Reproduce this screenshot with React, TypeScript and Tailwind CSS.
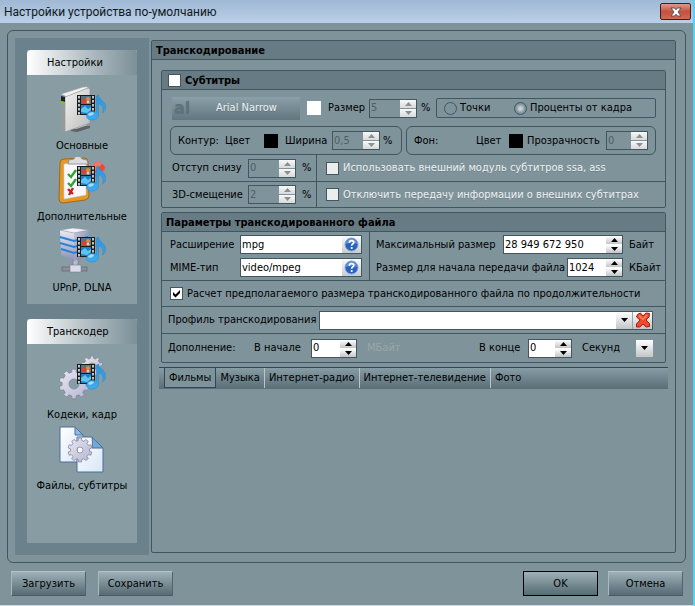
import { ReactNode, useId, useState } from 'react'
import clsx from 'clsx'

const tabs = ['Фильмы', 'Музыка', 'Интернет-радио', 'Интернет-телевидение', 'Фото']

function MediaBadge() {
  return (
    <g>
      <rect x="20" y="10" width="18" height="20" fill="#1b1b1b" />
      {[11, 15, 19, 23, 27].map((y) => (
        <g key={y} fill="#b9c3c8">
          <rect x="21" y={y} width="2" height="2.500" />
          <rect x="35" y={y} width="2" height="2.500" />
        </g>
      ))}
      <rect x="24" y="11" width="10" height="8" fill="#55748c" />
      <circle cx="27" cy="16" r="2.5" fill="#d8452f" />
      <circle cx="31" cy="14" r="2" fill="#e58a2c" />
      <circle cx="31" cy="17" r="1.5" fill="#f0c9a5" />
      <rect x="24" y="20" width="10" height="9" fill="#1c82c6" />
      <path d="M24 24l4-3 3 3 3-2v3l-4 3-6-1z" fill="#5fc3ee" />
      <path
        d="M39.500 11l2-1c.5 5 7 6 7 12 0 3-1 4.500-3 6 1.500-5 .5-8-4-9.500v12c0 2.500-3.500 4.500-6.500 4.500s-5.500-1.500-5.500-4 3-4.500 6-4.500c1.500 0 3 .2 4 .8z"
        fill="url(#note)"
        stroke="#2a8bd0"
        strokeWidth=".6"
      />
      <ellipse cx="34" cy="29" rx="3" ry="1.5" fill="#a5dcfa" transform="rotate(-20 34 29)" />
    </g>
  )
}

// Shared gradients, rendered once for all sidebar icons
function IconDefs() {
  return (
    <svg width="0" height="0" className="absolute" aria-hidden="true">
      <defs>
        <linearGradient id="note" x1="0" y1="0" x2="0" y2="1">
          <stop offset="0" stopColor="#2c95dd" />
          <stop offset="1" stopColor="#3dabed" />
        </linearGradient>
        <linearGradient id="box" x1="0" y1="0" x2="1" y2="1">
          <stop offset="0" stopColor="#f4f4f2" />
          <stop offset="1" stopColor="#b9bbba" />
        </linearGradient>
        <linearGradient id="server" x1="0" y1="0" x2="1" y2="1">
          <stop offset="0" stopColor="#c9cade" />
          <stop offset="1" stopColor="#6e7198" />
        </linearGradient>
        <linearGradient id="serverSide" x1="0" y1="0" x2="0" y2="1">
          <stop offset="0" stopColor="#e9eaf4" />
          <stop offset="1" stopColor="#8d90b4" />
        </linearGradient>
        <linearGradient id="gear" x1="0" y1="0" x2="1" y2="1">
          <stop offset="0" stopColor="#e9e9f3" />
          <stop offset="1" stopColor="#b3b4cf" />
        </linearGradient>
        <linearGradient id="page" x1="0" y1="0" x2="1" y2="1">
          <stop offset="0" stopColor="#ffffff" />
          <stop offset="1" stopColor="#d7e6f7" />
        </linearGradient>
      </defs>
    </svg>
  )
}

function Gear({ cx, cy, r, hole }: { cx: number; cy: number; r: number; hole: number }) {
  const teeth = 10
  const points: string[] = []
  for (let i = 0; i < teeth; i++) {
    const parts: [number, number][] = [
      [-0.3, 0.8],
      [-0.22, 1],
      [0.22, 1],
      [0.3, 0.8],
    ]
    parts.forEach(([offset, k]) => {
      const a = ((i + offset) * 2 * Math.PI) / teeth
      points.push(`${(cx + Math.sin(a) * r * k).toFixed(2)} ${(cy - Math.cos(a) * r * k).toFixed(2)}`)
    })
  }
  const circle = `M${cx - hole} ${cy}a${hole} ${hole} 0 1 0 ${hole * 2} 0a${hole} ${hole} 0 1 0 ${-hole * 2} 0z`
  return (
    <path
      d={`M${points.join('L')}z${circle}`}
      fill="url(#gear)"
      fillRule="evenodd"
      stroke="#84869f"
      strokeWidth=".8"
      strokeLinejoin="round"
    />
  )
}

function IconSvg({ children }: { children: ReactNode }) {
  return (
    <svg width="50" height="50" viewBox="0 0 50 50" aria-hidden="true">
      {children}
    </svg>
  )
}

function BasicIcon() {
  return (
    <IconSvg>
      <path d="M14 44l12-4 7 1v2l-13 4-6-1z" fill="#5e6264" />
      <path d="M16 43l11-4 4 1-12 4z" fill="#c7caca" />
      <path d="M4 9L26 2q4-1 6 1L10 12z" fill="#f2f3f2" stroke="#9a9c9c" strokeWidth=".6" />
      <path d="M8 12L31 3q2 0 2 2v33L8 47z" fill="url(#box)" stroke="#8d8f8f" strokeWidth=".6" />
      <path d="M4 10l4 2v35l-4-3z" fill="#979a9a" />
      <path d="M4 11l4 1v5l-4-1z" fill="#222" />
      <path d="M4 16l4 1-2 2-2-1z" fill="#70d020" />
      <MediaBadge />
    </IconSvg>
  )
}

function ExtraIcon() {
  return (
    <IconSvg>
      <path d="M3 7q0-4 4-4l20-1q4 0 4 4l1 34q0 3-4 4l-22 3q-4 0-4-4z" fill="#e49a27" stroke="#a96513" />
      <path d="M7 8l22-2v33L7 43z" fill="#f8f9fd" stroke="#c6c9da" strokeWidth=".6" />
      <path d="M11 8l1-4 5-1c0-3 7-4 8 0l5 1 1 4z" fill="#dcdde3" stroke="#85878f" strokeWidth=".8" />
      <path d="M37 8q3-4 7-1 6 4 3 7l-5 5-9-6z" fill="#ee4638" />
      <path d="M37 8q3-4 7-1l1 1-7 7-6-3z" fill="#ff8878" opacity=".7" />
      <path d="M31 13l9 6-10 12-5-5z" fill="#5a83c2" />
      <g fill="none" strokeWidth="2.4">
        <path d="M11 18l3 3 5-7" stroke="#31a331" />
        <path d="M11 27l3 3 5-7" stroke="#31a331" />
        <path d="M11 33l5 5M16 32l-4 7" stroke="#cc1f1f" />
      </g>
      <MediaBadge />
    </IconSvg>
  )
}

function ServerIcon() {
  return (
    <IconSvg>
      <rect x="16" y="32" width="5" height="10" fill="#b7b9ce" stroke="#73768f" strokeWidth=".6" />
      <rect x="5" y="40" width="25" height="4" fill="#8b8e9b" stroke="#5a5d68" strokeWidth=".6" />
      <path d="M13 38h11v7H13z" fill="#d9daea" stroke="#7b7e97" strokeWidth=".6" />
      <path d="M3 3l14 3v28L4 28z" fill="url(#serverSide)" />
      <path d="M17 6l15-3v26l-15 5z" fill="url(#server)" />
      <path d="M3 3l13-2 16 2-15 3z" fill="#f1f1f8" stroke="#8b8dab" strokeWidth=".5" />
      <g fill="none" stroke="#2584da" strokeWidth="2">
        <path d="M3 10l14 4 14-4" />
        <path d="M3 16l14 4 14-4" />
        <path d="M4 22l13 4 14-4" />
      </g>
      <MediaBadge />
    </IconSvg>
  )
}

function CodecIcon() {
  return (
    <IconSvg>
      <Gear cx={35} cy={13} r={11} hole={4} />
      <Gear cx={17} cy={30} r={15} hole={5} />
      <MediaBadge />
    </IconSvg>
  )
}

function FilesIcon() {
  return (
    <IconSvg>
      <path d="M3 2h15l8 8v27H3z" fill="url(#page)" stroke="#4d6d9b" />
      <path d="M18 2v8h8z" fill="#8dbce8" stroke="#4d6d9b" />
      <path d="M20 12h15l11 11v24H20z" fill="url(#page)" stroke="#4d6d9b" />
      <path d="M35 12q1 7 0 11h11z" fill="#6fa9de" stroke="#4d6d9b" />
      <Gear cx={23} cy={25} r={12} hole={3} />
    </IconSvg>
  )
}

function SidebarItem({ icon, label }: { icon: ReactNode; label: string }) {
  return (
    <a href="#" className="flex h-[71px] flex-col items-center">
      {icon}
      <span className="mt-[5px] leading-3 whitespace-nowrap">{label}</span>
    </a>
  )
}

function SidebarGroup({ title, children }: { title: string; children: ReactNode }) {
  return (
    <section className="bg-[#879ca3]">
      <h2 className="flex h-[25px] items-center rounded-t-sm bg-linear-to-r from-white via-[#b9c4c8] to-[#7b9099] pt-px pl-5">
        {title}
      </h2>
      <div className="pt-[10px]">{children}</div>
    </section>
  )
}

function Arrow({ up, muted }: { up?: boolean; muted?: boolean }) {
  return (
    <svg width="7" height="4" viewBox="0 0 7 4" aria-hidden="true">
      <path d={up ? 'M0 4L3.5 0L7 4z' : 'M0 0h7L3.5 4z'} fill={muted ? '#8b8f91' : '#000'} />
    </svg>
  )
}

interface SpinnerProps {
  id: string
  value: string
  disabled?: boolean
  className: string
}

function Spinner({ id, value, disabled, className }: SpinnerProps) {
  const button = clsx(
    'flex flex-1 items-center justify-center bg-linear-to-b',
    disabled ? 'from-[#f8f8f8] to-[#d8dadb]' : 'from-white to-[#c3c5c7]'
  )
  return (
    <div
      className={clsx(
        'flex h-[19px] shrink-0 border border-[#41565f]',
        disabled ? 'bg-[#7f939b] text-[#4c6069]' : 'bg-white text-black',
        className
      )}
    >
      <input id={id} defaultValue={value} disabled={disabled} className="w-0 min-w-0 flex-1 pl-px outline-none" />
      <div className="flex w-4 flex-col gap-px">
        <button type="button" aria-label="+" disabled={disabled} className={button}>
          <Arrow up muted={disabled} />
        </button>
        <button type="button" aria-label="-" disabled={disabled} className={button}>
          <Arrow muted={disabled} />
        </button>
      </div>
    </div>
  )
}

function Checkbox({ id, checked, disabled }: { id: string; checked?: boolean; disabled?: boolean }) {
  return (
    <span className="grid size-[13px] shrink-0">
      <input
        id={id}
        type="checkbox"
        defaultChecked={checked}
        disabled={disabled}
        className="peer col-start-1 row-start-1 size-[13px] appearance-none border border-[#41565f] bg-white disabled:bg-[#eceeee]"
      />
      <svg
        viewBox="0 0 13 13"
        className="pointer-events-none invisible col-start-1 row-start-1 size-[13px] peer-checked:visible"
      >
        <path d="M3 5v3l2.500 2.500L10 6V3L5.500 7.500z" fill="#000" />
      </svg>
    </span>
  )
}

function Swatch({ label, color }: { label: string; color: string }) {
  return <button type="button" aria-label={label} className={clsx('size-[14px] shrink-0', color)} />
}

function Panel({ title, children }: { title: ReactNode; children: ReactNode }) {
  return (
    <section className="rounded-xs border border-[#41565f]">
      <h3 className="flex h-[19px] items-center border-b border-[#41565f] bg-[#677b84] px-1 pt-px text-[11px] font-bold">
        {title}
      </h3>
      {children}
    </section>
  )
}

function HelpField({ id, value }: { id: string; value: string }) {
  return (
    <div className="flex h-[19px] w-[122px] border border-[#41565f] bg-white">
      <input id={id} defaultValue={value} className="w-0 min-w-0 flex-1 pl-px outline-none" />
      <button
        type="button"
        aria-label="?"
        className="flex w-[19px] items-center justify-center bg-linear-to-b from-[#fbfbfb] to-[#c8cbcd]"
      >
        <svg width="15" height="15" viewBox="0 0 15 15" aria-hidden="true">
          <circle cx="7.5" cy="7.5" r="6.5" fill="#2a62bd" stroke="#7fa5dd" />
          <path d="M2 7a5.500 5.500 0 0 1 11 0q-5-3-11 0z" fill="#78a6e6" opacity=".7" />
          <path d="M5.300 5.800q.2-2.200 2.300-2.200 2.200 0 2.200 1.800 0 1-1.200 1.700-.9.500-.9 1.600" fill="none" stroke="#fff" strokeWidth="1.700" />
          <circle cx="7.700" cy="11" r="1.100" fill="#fff" />
        </svg>
      </button>
    </div>
  )
}

function SubtitlesPanel() {
  const id = useId()
  return (
    <Panel
      title={
        <span className="flex items-center gap-1 pl-[2px]">
          <Checkbox id={`${id}-on`} />
          <label htmlFor={`${id}-on`}>Субтитры</label>
        </span>
      }
    >
      <div className="flex h-9 items-center pr-[9px] pl-[10px]">
        <button
          type="button"
          disabled
          className="flex h-[23px] w-32 shrink-0 items-center bg-linear-to-b from-[#8ba0a8] to-[#61767f] text-[#eef1f2] text-shadow-2xs"
        >
          <span className="w-9 pl-[2px] text-left font-['DejaVu_Sans'] text-base leading-5 font-bold text-[#5d727b]">
            al
          </span>
          <span className="pl-2">Arial Narrow</span>
        </button>
        <span className="flex w-[69px] items-center gap-[7px] pl-[7px]">
          <Swatch label="Цвет" color="bg-white" />
          <label htmlFor={`${id}-size`}>Размер</label>
        </span>
        <Spinner id={`${id}-size`} value="5" disabled className="w-12" />
        <span className="w-[19px] pl-1">%</span>
        <div className="flex h-5 flex-1 items-center rounded-xs border border-[#41565f] pl-[7px]">
          <label className="flex w-[70px] items-center gap-[3px]">
            <input
              type="radio"
              name={`${id}-unit`}
              disabled
              className="size-[13px] appearance-none rounded-full border border-[#41565f]"
            />
            Точки
          </label>
          <label className="flex items-center gap-[3px]">
            <input
              type="radio"
              name={`${id}-unit`}
              disabled
              defaultChecked
              className="size-[13px] appearance-none rounded-full border border-[#41565f] bg-radial from-[#cbd2d5] from-15% to-[#7f939b] to-60%"
            />
            Проценты от кадра
          </label>
        </div>
      </div>
      <div className="flex h-[29px] gap-1 pr-[9px] pl-2">
        <div className="flex w-[232px] items-center rounded-md border border-[#41565f] pl-[7px]">
          <span className="w-[47px]">Контур:</span>
          <span className="w-[39px]">Цвет</span>
          <Swatch label="Цвет контура" color="bg-black" />
          <label htmlFor={`${id}-width`} className="w-[54px] pl-[7px]">
            Ширина
          </label>
          <Spinner id={`${id}-width`} value="0,5" disabled className="w-12" />
          <span className="pl-[3px]">%</span>
        </div>
        <div className="flex flex-1 items-center rounded-md border border-[#41565f] px-[7px]">
          <span className="flex-1">Фон:</span>
          <span className="w-[33px]">Цвет</span>
          <Swatch label="Цвет фона" color="bg-black" />
          <label htmlFor={`${id}-alpha`} className="w-[83px] pl-1">
            Прозрачность
          </label>
          <Spinner id={`${id}-alpha`} value="0" disabled className="w-[42px]" />
        </div>
      </div>
      <div className="flex">
        <div className="flex w-[155px] flex-col border-r border-[#41565f]">
          <div className="flex h-[27px] items-center border-b border-[#41565f]">
            <label htmlFor={`${id}-bottom`} className="w-[86px] pl-[10px] whitespace-nowrap">
              Отступ снизу
            </label>
            <Spinner id={`${id}-bottom`} value="0" disabled className="w-12" />
            <span className="pl-[6px]">%</span>
          </div>
          <div className="flex h-[25px] items-center">
            <label htmlFor={`${id}-shift`} className="w-[86px] pl-[10px] whitespace-nowrap">
              3D-смещение
            </label>
            <Spinner id={`${id}-shift`} value="2" disabled className="w-12" />
            <span className="pl-[6px]">%</span>
          </div>
        </div>
        <div className="flex flex-1 flex-col text-[#eef1f2] text-shadow-2xs">
          <div className="flex h-[27px] items-center gap-1 border-b border-[#41565f] pl-[9px]">
            <Checkbox id={`${id}-ssa`} disabled />
            <label htmlFor={`${id}-ssa`}>Использовать внешний модуль субтитров ssa, ass</label>
          </div>
          <div className="flex h-[25px] items-center gap-1 pl-[9px]">
            <Checkbox id={`${id}-info`} disabled />
            <label htmlFor={`${id}-info`}>Отключить передачу информации о внешних субтитрах</label>
          </div>
        </div>
      </div>
    </Panel>
  )
}

function FilePanel() {
  const id = useId()
  return (
    <Panel title="Параметры транскодированного файла">
      <div className="flex h-[49px] border-b border-[#41565f]">
        <div className="flex w-52 flex-col gap-1 border-r border-[#41565f] pt-[3px] pl-2">
          <div className="flex items-center">
            <label htmlFor={`${id}-ext`} className="w-[70px]">
              Расширение
            </label>
            <HelpField id={`${id}-ext`} value="mpg" />
          </div>
          <div className="flex items-center">
            <label htmlFor={`${id}-mime`} className="w-[70px]">
              MIME-тип
            </label>
            <HelpField id={`${id}-mime`} value="video/mpeg" />
          </div>
        </div>
        <div className="flex flex-1 flex-col gap-1 pt-[3px] pl-[6px]">
          <div className="flex items-center">
            <label htmlFor={`${id}-max`} className="flex-1">
              Максимальный размер
            </label>
            <Spinner id={`${id}-max`} value="28 949 672 950" className="w-[120px]" />
            <span className="w-[42px] pl-[6px]">Байт</span>
          </div>
          <div className="flex items-center">
            <label htmlFor={`${id}-start`} className="flex-1 whitespace-nowrap">
              Размер для начала передачи файла
            </label>
            <Spinner id={`${id}-start`} value="1024" className="w-14" />
            <span className="w-[42px] pl-[6px]">КБайт</span>
          </div>
        </div>
      </div>
      <div className="flex h-[26px] items-center gap-1 border-b border-[#41565f] pl-2">
        <Checkbox id={`${id}-calc`} checked />
        <label htmlFor={`${id}-calc`}>
          Расчет предполагаемого размера транскодированного файла по продолжительности
        </label>
      </div>
      <div className="flex h-[27px] items-center border-b border-[#41565f] pr-3 pl-[6px]">
        <label htmlFor={`${id}-profile`} className="w-[151px]">
          Профиль транскодирования
        </label>
        <div className="flex h-[19px] flex-1 border border-[#41565f] bg-white">
          <div className="grid flex-1 items-stretch">
            <select
              id={`${id}-profile`}
              className="col-start-1 row-start-1 w-full appearance-none pl-px outline-none"
            >
              <option></option>
            </select>
            <span className="pointer-events-none col-start-1 row-start-1 flex w-4 items-center justify-center justify-self-end bg-linear-to-b from-white to-[#c3c5c7]">
              <Arrow />
            </span>
          </div>
          <button
            type="button"
            aria-label="×"
            className="flex w-5 items-center justify-center border-l border-[#9aa5a9] bg-linear-to-b from-white to-[#c3c5c7]"
          >
            <svg width="16" height="16" viewBox="0 0 16 16" aria-hidden="true">
              <path
                d="M2.500 2.500L5.500 1 8 4l3-3 3.500.5-.5 3.500L11 8l3.500 3.500v3l-3.500.5L8 12l-3 3H1.500v-3L5 8 1.500 5z"
                fill="#f04a2a"
                stroke="#a81b10"
                strokeLinejoin="round"
              />
              <path d="M4 3.500L8 7.500 12 3" fill="none" stroke="#ff8a68" strokeWidth="1.200" />
            </svg>
          </button>
        </div>
      </div>
      <div className="flex h-7 items-center pr-3 pl-[6px]">
        <span className="w-[86px]">Дополнение:</span>
        <label htmlFor={`${id}-begin`} className="w-[57px]">
          В начале
        </label>
        <Spinner id={`${id}-begin`} value="0" className="w-[46px]" />
        <span className="flex-1 pl-[10px] text-[#9aa7ab]">МБайт</span>
        <label htmlFor={`${id}-end`} className="w-[49px]">
          В конце
        </label>
        <Spinner id={`${id}-end`} value="0" className="w-11" />
        <span className="w-16 pl-[10px]">Секунд</span>
        <button
          type="button"
          aria-label="▾"
          className="flex size-[17px] items-center justify-center bg-linear-to-b from-white to-[#c3c5c7]"
        >
          <Arrow />
        </button>
      </div>
    </Panel>
  )
}

function MediaTabs() {
  const [active, setActive] = useState(tabs[0])
  return (
    <div
      role="tablist"
      className="-mx-[2px] flex h-[22px] border-t border-[#31464f] bg-linear-to-b from-[#879ca4] to-[#596e77] pl-[5px]"
    >
      {tabs.map((tab, i) => (
        <button
          key={tab}
          role="tab"
          type="button"
          aria-selected={tab === active}
          onClick={() => setActive(tab)}
          className={clsx(
            'flex h-5 items-center px-1 whitespace-nowrap',
            tab === active ? 'border border-t-0 border-[#31464f] bg-[#7f939b]' : 'border-r',
            tab !== active && (i < tabs.length - 1 ? 'border-[#b9c6cb]' : 'border-transparent')
          )}
        >
          {tab}
        </button>
      ))}
    </div>
  )
}

function FooterButton({ children, primary }: { children: ReactNode; primary?: boolean }) {
  return (
    <button
      type="button"
      className={clsx(
        'h-[25px] w-[75px] border bg-linear-to-b from-[#9fb1b8] to-[#566b74] pt-px',
        primary ? 'border-black' : 'border-t-[#b4c3c9] border-r-[#50656e] border-b-[#465b64] border-l-[#a9b9bf]'
      )}
    >
      {children}
    </button>
  )
}

function App() {
  return (
    <div className="flex min-h-screen flex-col border-r-2 border-b border-r-[#55d3f4] border-b-[#c9dbe6] bg-[#7f939b] font-['DejaVu_Sans_Condensed','DejaVu_Sans',sans-serif] text-[11px] leading-4 text-black">
      <IconDefs />
      <header className="flex h-[23px] items-start justify-between bg-linear-to-b from-[#9fb8d4] to-[#bbd0e8] pr-[2px] pl-1">
        <h1 className="pt-1 font-['Roboto','Noto_Sans',sans-serif] text-[12px] leading-4 text-[#101820]">
          Настройки устройства по-умолчанию
        </h1>
        <button
          type="button"
          aria-label="×"
          className="mt-[3px] flex h-[17px] w-[31px] items-center justify-center rounded-xs border border-[#4b1a1c] bg-linear-to-b from-[#dd9a8e] via-[#c4503f] via-50% to-[#cf6a50]"
        >
          <svg width="12" height="10" viewBox="0 0 12 10" aria-hidden="true">
            <path
              d="M1 1h3.500L6 2.800 7.500 1H11L8 5l3 4H7.500L6 7.200 4.500 9H1l3-4z"
              fill="#fff"
              stroke="#54494d"
              strokeWidth=".9"
            />
          </svg>
        </button>
      </header>

      <main className="mx-[7px] mt-[7px] flex flex-1 rounded-md border border-[#41565f] p-[7px]">
        <nav className="flex w-[134px] shrink-0 flex-col gap-[15px] bg-[#6b828d] px-3 pt-3 pb-[11px]">
          <SidebarGroup title="Настройки">
            <SidebarItem icon={<BasicIcon />} label="Основные" />
            <SidebarItem icon={<ExtraIcon />} label="Дополнительные" />
            <SidebarItem icon={<ServerIcon />} label="UPnP, DLNA" />
            <div className="h-[6px]" />
          </SidebarGroup>
          <SidebarGroup title="Транскодер">
            <SidebarItem icon={<CodecIcon />} label="Кодеки, кадр" />
            <SidebarItem icon={<FilesIcon />} label="Файлы, субтитры" />
            <div className="h-[47px]" />
          </SidebarGroup>
        </nav>
        <section className="m-[2px] flex-1 rounded-xs border border-[#41565f]">
          <h2 className="flex h-[19px] items-center border-b border-[#41565f] bg-[#677b84] px-1 pt-px text-[11px] font-bold">
            Транскодирование
          </h2>
          <div className="flex flex-col gap-1 px-[9px] pt-[10px]">
            <SubtitlesPanel />
            <FilePanel />
            <MediaTabs />
          </div>
        </section>
      </main>

      <footer className="flex items-center justify-between pt-2 pr-[10px] pb-[9px] pl-[11px]">
        <div className="flex gap-3">
          <FooterButton>Загрузить</FooterButton>
          <FooterButton>Сохранить</FooterButton>
        </div>
        <div className="flex gap-[10px]">
          <FooterButton primary>OK</FooterButton>
          <FooterButton>Отмена</FooterButton>
        </div>
      </footer>
    </div>
  )
}

export default App
